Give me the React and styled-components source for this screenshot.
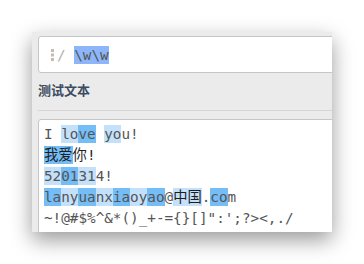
import React from "react";
import styled, { createGlobalStyle } from "styled-components";

const GlobalStyle = createGlobalStyle`
  html, body {
    margin: 0;
    padding: 0;
    background: #ffffff;
  }
  body {
    font-family: "DejaVu Sans Mono", "Noto Sans CJK SC", monospace;
  }
`;

// [text, match level (1 light, 2 dark), cjk]
const lines = [
  [["I "], ["lo", 1], ["ve", 2], [" "], ["yo", 1], ["u!"]],
  [["我爱", 2, true], ["你!", 0, true]],
  [["52", 1], ["01", 2], ["31", 1], ["4!"]],
  [
    ["la", 2], ["ny", 1], ["ua", 2], ["nx", 1], ["ia", 2], ["oy", 1], ["ao", 2],
    ["@"], ["中国", 1, true], ["."], ["co", 2], ["m"],
  ],
  [["~!@#$%^&*()_+-={}[]\":';?><,./"]],
];

function App() {
  return (
    <Page>
      <GlobalStyle />
      <Panel>
        <RegexBox>
          <Handle width="4" height="12" viewBox="0 0 4 12">
            <rect x="0" y="0" width="3" height="3" fill="#c4bcae" />
            <rect x="0" y="4.5" width="3" height="3" fill="#c4bcae" />
            <rect x="0" y="9" width="3" height="3" fill="#c4bcae" />
          </Handle>
          <Slash>/ </Slash>
          <Selected>\w\w</Selected>
        </RegexBox>
        <SectionHead>
          <Label>测试文本</Label>
        </SectionHead>
        <TextBox>
          {lines.map((line, i) => (
            <Line key={i}>
              {line.map(([text, level, cjk], j) => (
                <Piece key={j} level={level || 0} cjk={cjk ? 1 : 0}>
                  {text}
                </Piece>
              ))}
            </Line>
          ))}
        </TextBox>
      </Panel>
    </Page>
  );
}

const Page = styled.div`
  padding: 32px;
`;

const Panel = styled.div`
  width: 300px;
  height: 200px;
  box-sizing: border-box;
  padding: 4px 0 0 6px;
  background: #ebebeb;
  overflow: hidden;
  box-shadow: 0 8px 20px rgba(0, 0, 0, 0.4);
`;

const RegexBox = styled.div`
  display: flex;
  align-items: center;
  width: 320px;
  height: 37px;
  box-sizing: border-box;
  padding-left: 12px;
  background: #ffffff;
  border: 1px solid #c6c6c6;
  border-radius: 3px;
  font-size: 14.3px;
  color: #555;
`;

const Handle = styled.svg`
  margin-right: 2px;
`;

const Slash = styled.span`
  white-space: pre;
  color: #b0b0b0;
`;

const Selected = styled.span`
  background: #8cb5fa;
  color: #555;
  padding: 1px 0;
`;

const SectionHead = styled.div`
  display: flex;
  align-items: center;
  height: 38px;
  box-sizing: border-box;
  padding-bottom: 4px;
  border-bottom: 1px solid #d6d6d6;
`;

const Label = styled.span`
  font-family: "Noto Sans CJK SC", sans-serif;
  font-weight: 700;
  font-size: 13px;
  color: #3b4c60;
`;

const TextBox = styled.div`
  margin-top: 8px;
  width: 320px;
  height: 140px;
  box-sizing: border-box;
  padding: 4px 0 0 5px;
  background: #ffffff;
  border: 1px solid #c6c6c6;
  border-radius: 3px;
  font-size: 14.3px;
  line-height: 21px;
  color: #555;
`;

const Line = styled.div`
  white-space: pre;
`;

const Piece = styled.span`
  color: ${(props) => (props.cjk ? "#1e1e1e" : "inherit")};
  background: ${(props) =>
    props.level === 2 ? "#74bdf7" : props.level === 1 ? "#c4e1fc" : "transparent"};
  padding: ${(props) => (props.level ? "1px 0" : "0")};
`;

export default App;
